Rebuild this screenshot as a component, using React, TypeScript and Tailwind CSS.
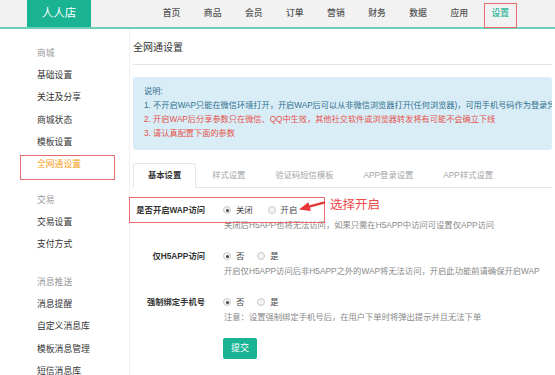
import React from 'react';

const navItems = ['首页', '商品', '会员', '订单', '营销', '财务', '数据', '应用', '设置'];

const sideGroups = [
  { title: '商城', items: ['基础设置', '关注及分享', '商城状态', '模板设置', '全网通设置'] },
  { title: '交易', items: ['交易设置', '支付方式'] },
  { title: '消息推送', items: ['消息提醒', '自定义消息库', '模板消息管理', '短信消息库'] },
];

const tabs = ['基本设置', '样式设置', '验证码短信模板', 'APP登录设置', 'APP样式设置'];

function Radio({ checked, label }: { checked?: boolean; label: string }) {
  return (
    <label className="flex items-center gap-[5px]">
      <span className="w-[8px] h-[8px] rounded-full border border-[#c9c9c9] bg-[#f3f3f3] flex items-center justify-center">
        {checked && <span className="w-[3px] h-[3px] rounded-full bg-[#444]" />}
      </span>
      <span className="text-[8.3px] text-[#444]">{label}</span>
    </label>
  );
}

function FormRow({
  label,
  options,
  help,
  gap,
  className,
  children,
}: {
  label: string;
  options: { label: string; checked?: boolean }[];
  help: string;
  gap: string;
  className?: string;
  children?: React.ReactNode;
}) {
  return (
    <div className={className}>
      <div className="relative flex items-center h-[16px]">
        <div className="w-[72px] text-right text-[8.3px] font-bold text-[#333] whitespace-nowrap">{label}</div>
        <div className={`ml-[18px] flex items-center ${gap}`}>
          {options.map((o) => (
            <Radio key={o.label} label={o.label} checked={o.checked} />
          ))}
        </div>
        {children}
      </div>
      <div className="ml-[91px] h-[14px] leading-[14px] text-[8.3px] text-[#888] whitespace-nowrap">{help}</div>
    </div>
  );
}

export default function App() {
  return (
    <div className="h-screen w-full overflow-hidden bg-white font-['Liberation_Sans','Noto_Sans_CJK_SC',sans-serif]">
      {/* top bar */}
      <div className="h-[29px] bg-[#f2f2f2] border-b-2 border-[#6ccfb8] flex">
        <div className="ml-[27px] w-[64px] h-[27px] bg-[#1ab394] text-white text-[11.5px] flex items-center justify-center">
          人人店
        </div>
        <div className="ml-[60px] flex">
          {navItems.map((n) => (
            <div
              key={n}
              className={`relative w-[41.1px] h-[27px] flex items-center justify-center text-[8.8px] font-medium ${
                n === '设置' ? 'text-[#1ab394]' : 'text-[#555]'
              }`}
            >
              {n}
              {n === '设置' && (
                <span className="absolute left-[4px] right-[4px] top-[3px] bottom-[-1px] border border-[#e96b6b]" />
              )}
            </div>
          ))}
        </div>
      </div>

      <div className="flex">
        {/* sidebar */}
        <div className="w-[130px] shrink-0 border-r border-[#f0f0f0] pt-[12.85px] pl-[37px] h-[360px]">
          {sideGroups.map((g, gi) => (
            <div key={g.title} className={gi === 1 ? 'mt-[13.2px]' : gi === 2 ? 'mt-[15.1px]' : ''}>
              <div className="h-[22.3px] leading-[22.3px] text-[8.8px] text-[#999]">{g.title}</div>
              {g.items.map((it) => (
                <div
                  key={it}
                  className={`relative h-[22.3px] leading-[22.3px] text-[8.8px] ${
                    it === '全网通设置' ? 'text-[#f7a21c]' : 'text-[#333]'
                  }`}
                >
                  {it}
                  {it === '全网通设置' && (
                    <span className="absolute left-[-17px] top-[1.5px] w-[95px] h-[25px] border border-[#e96b6b]" />
                  )}
                </div>
              ))}
            </div>
          ))}
        </div>

        {/* main */}
        <div className="flex-1 min-w-0 pl-[3px] pr-[3px] pt-[11px]">
          <div className="h-[16px] leading-[16px] text-[10px] text-[#333]">全网通设置</div>
          <div className="mt-[8px] border-t border-[#e5e5e5]" />

          <div className="mt-[12px] h-[73px] rounded-[3px] bg-[#d9edf7] pl-[11px] pt-[8px] overflow-hidden whitespace-nowrap text-[8.2px] leading-[14px]">
            <div className="text-[#31708f]">说明:</div>
            <div className="text-[#31708f]">
              1. 不开启WAP只能在微信环境打开，开启WAP后可以从非微信浏览器打开(任何浏览器)，可用手机号码作为登录凭证
            </div>
            <div className="text-[#e5534b]">2. 开启WAP后分享参数只在微信、QQ中生效，其他社交软件或浏览器转发将有可能不会确立下线</div>
            <div className="text-[#e5534b]">3. 请认真配置下面的参数</div>
          </div>

          <div className="mt-[13px] flex gap-[2px] border-b border-[#e5e5e5] h-[25px]">
            {tabs.map((t, i) => (
              <div
                key={t}
                className={`px-[14px] h-[25px] flex items-center text-[8.3px] whitespace-nowrap ${
                  i === 0
                    ? 'bg-white border border-[#e5e5e5] border-b-white rounded-t-[3px] text-[#333] font-bold'
                    : 'text-[#a5a5a5]'
                }`}
              >
                {t}
              </div>
            ))}
          </div>

          <FormRow
            className="mt-[14px]"
            label="是否开启WAP访问"
            gap="gap-[15px]"
            options={[{ label: '关闭', checked: true }, { label: '开启' }]}
            help="关闭后H5APP也将无法访问，如果只需在H5APP中访问可设置仅APP访问"
          >
            <span className="absolute left-[-4px] top-[-5px] w-[196px] h-[26px] border border-[#e96b6b]" />
            <svg className="absolute left-[163px] top-[-3px]" width="32" height="14" viewBox="0 0 32 14">
              <line x1="12" y1="7.8" x2="28" y2="3.6" stroke="#e8363a" strokeWidth="2.4" strokeLinecap="round" />
              <polygon points="3,10.5 14.8,11.9 12.4,3.3" fill="#e8363a" />
            </svg>
            <span className="absolute left-[197px] top-[-5px] leading-[16px] text-[12.5px] text-[#ef4a4a] whitespace-nowrap">
              选择开启
            </span>
          </FormRow>

          <FormRow
            className="mt-[16px]"
            label="仅H5APP访问"
            gap="gap-[13px]"
            options={[{ label: '否', checked: true }, { label: '是' }]}
            help="开启仅H5APP访问后非H5APP之外的WAP将无法访问，开启此功能前请确保开启WAP"
          />

          <FormRow
            className="mt-[16px]"
            label="强制绑定手机号"
            gap="gap-[13px]"
            options={[{ label: '否', checked: true }, { label: '是' }]}
            help="注意：设置强制绑定手机号后，在用户下单时将弹出提示并且无法下单"
          />

          <button className="mt-[14px] ml-[90px] w-[34px] h-[21px] rounded-[2px] bg-[#1ab394] text-white text-[9px]">
            提交
          </button>
        </div>
      </div>
    </div>
  );
}
